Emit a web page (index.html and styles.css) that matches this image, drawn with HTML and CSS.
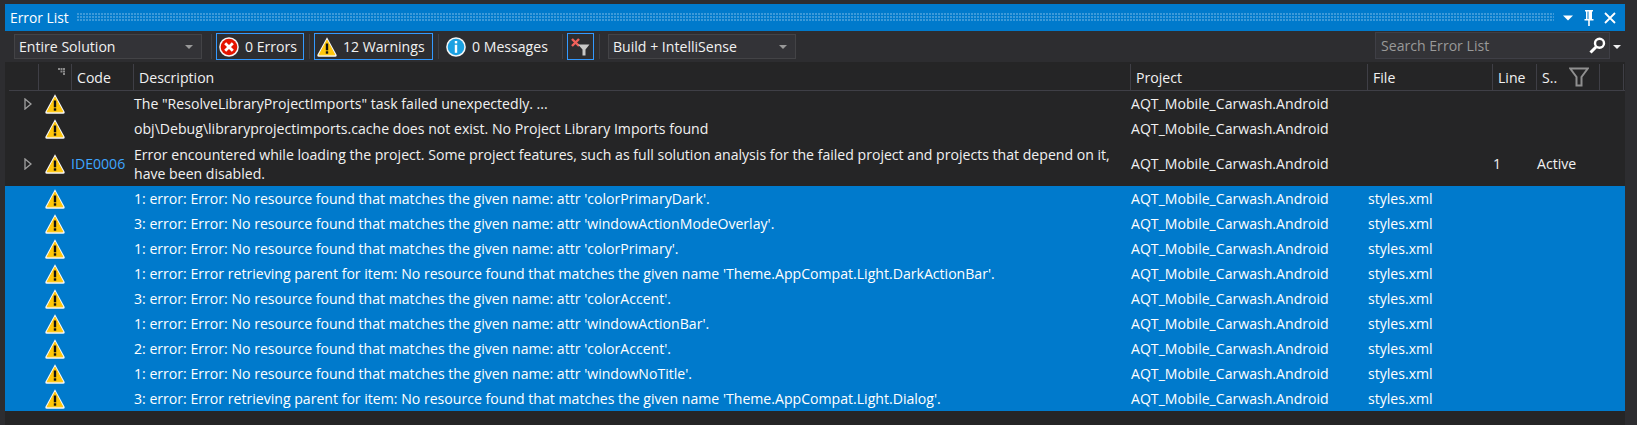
FILE: index.html
```html
<!DOCTYPE html>
<html lang="en">
<head>
<meta charset="utf-8">
<title>Error List</title>
<link rel="stylesheet" href="styles.css">
</head>
<body>
<svg class="defs" width="0" height="0" aria-hidden="true">
  <symbol id="warn" viewBox="0 0 20 20">
    <path d="M10 .3 L19.7 18 Q20 19.700 18.400 19.700 L1.600 19.700 Q0 19.700 .3 18 Z" fill="#f6f6f6"/>
    <path d="M10 3.200 L17.800 17.800 L2.200 17.800 Z" fill="#ffc60a" stroke="#ffc60a" stroke-linejoin="round"/>
    <rect x="8.800" y="6.500" width="2.400" height="6.800" fill="#111"/>
    <rect x="8.800" y="14.300" width="2.400" height="2.400" fill="#111"/>
  </symbol>
</svg>
<main class="window">
  <header class="titlebar">
    <span class="title">Error List</span>
    <span class="grip"></span>
    <span class="win-btns">
      <svg width="12" height="12" viewBox="0 0 12 12"><path d="M1 3.500h10l-5 5z" fill="#fff"/></svg>
      <svg width="12" height="16" viewBox="0 0 12 16"><path d="M2 0h8v1.500H9V9h1.500v1.500H6.800V16H5.200v-5.500H1.500V9H3V1.500H2zM4.500 1.500V9h1V1.500z" fill="#fff" fill-rule="evenodd"/></svg>
      <svg width="12" height="12" viewBox="0 0 12 12"><path d="M1 1l10 10M11 1L1 11" stroke="#fff" stroke-width="1.800" fill="none"/></svg>
    </span>
  </header>
  <div class="toolbar">
    <div class="combo combo-scope"><span>Entire Solution</span><i class="caret"></i></div>
    <span class="sep"></span>
    <button class="tbtn on btn-errors">
      <svg width="20" height="20" viewBox="0 0 20 20"><circle cx="10" cy="10" r="9.800" fill="#f6f6f6"/><circle cx="10" cy="10" r="8.300" fill="#e51400"/><path d="M6.200 6.200l7.600 7.600M13.800 6.200l-7.600 7.600" stroke="#fff" stroke-width="2.800"/></svg>
      <span>0 Errors</span>
    </button>
    <span class="sep"></span>
    <button class="tbtn on btn-warn">
      <svg class="ico"><use href="#warn"/></svg>
      <span>12 Warnings</span>
    </button>
    <span class="sep"></span>
    <button class="tbtn btn-msg">
      <svg width="20" height="20" viewBox="0 0 20 20"><circle cx="10" cy="10" r="9.800" fill="#f6f6f6"/><circle cx="10" cy="10" r="8.300" fill="#1ba1e2"/><rect x="8.800" y="4" width="2.400" height="2.400" fill="#fff"/><rect x="8.800" y="7.800" width="2.400" height="8" fill="#fff"/></svg>
      <span>0 Messages</span>
    </button>
    <span class="sep"></span>
    <button class="tbtn on btn-filter">
      <svg width="20" height="18" viewBox="0 0 20 18"><path d="M1 1l7 7M8 1L1 8" stroke="#f1605a" stroke-width="2.400"/><path d="M7 6.500h11.500l-4 5v6h-3v-6z" fill="#c8c8c8"/></svg>
    </button>
    <span class="sep"></span>
    <div class="combo combo-type"><span>Build + IntelliSense</span><i class="caret"></i></div>
    <div class="search"><span class="search-text">Search Error List</span>
      <svg width="17" height="17" viewBox="0 0 17 17"><circle cx="10.500" cy="6.200" r="4.500" fill="none" stroke="#fff" stroke-width="2.400"/><path d="M7 10l-5.500 5.500" stroke="#fff" stroke-width="3"/></svg>
    </div>
    <i class="caret caret-search"></i>
  </div>
  <div class="grid">
    <div class="row head">
      <span class="hc"></span>
      <span class="hc hc-sort"><svg width="7" height="7" viewBox="0 0 7 7"><path d="M0 0h2v2H0zM2.500 0h2v2h-2zM5 0h2v2H5zM2.500 2.500h2v2h-2zM5 2.500h2v2H5zM5 5h2v2H5z" fill="#8a8a8a"/></svg></span>
      <span class="hc">Code</span>
      <span class="hc">Description</span>
      <span class="hc">Project</span>
      <span class="hc">File</span>
      <span class="hc">Line</span>
      <span class="hc hc-state">S..<svg width="20" height="20" viewBox="0 0 20 20"><path d="M1.200 1.500h17.600L12.500 10v8.500h-5V10z" fill="none" stroke="#8f8f8f" stroke-width="2"/></svg></span>
      <span class="hc"></span>
    </div>
    <div class="row"><span class="exp"><svg width="8" height="12" viewBox="0 0 8 12"><path d="M1 1l6 5-6 5z" fill="none" stroke="#a0a0a0" stroke-width="1.300"/></svg></span><span class="wi"><svg class="ico"><use href="#warn"/></svg></span><span class="code"></span><span class="desc">The "ResolveLibraryProjectImports" task failed unexpectedly. ...</span><span class="proj">AQT_Mobile_Carwash.Android</span><span class="file"></span><span class="line"></span><span class="state"></span></div>
    <div class="row"><span class="exp"></span><span class="wi"><svg class="ico"><use href="#warn"/></svg></span><span class="code"></span><span class="desc">obj\Debug\libraryprojectimports.cache does not exist. No Project Library Imports found</span><span class="proj">AQT_Mobile_Carwash.Android</span><span class="file"></span><span class="line"></span><span class="state"></span></div>
    <div class="row tall"><span class="exp"><svg width="8" height="12" viewBox="0 0 8 12"><path d="M1 1l6 5-6 5z" fill="none" stroke="#a0a0a0" stroke-width="1.300"/></svg></span><span class="wi"><svg class="ico"><use href="#warn"/></svg></span><span class="code link">IDE0006</span><span class="desc">Error encountered while loading the project. Some project features, such as full solution analysis for the failed project and projects that depend on it, have been disabled.</span><span class="proj">AQT_Mobile_Carwash.Android</span><span class="file"></span><span class="line">1</span><span class="state">Active</span></div>
    <div class="row sel"><span class="exp"></span><span class="wi"><svg class="ico"><use href="#warn"/></svg></span><span class="code"></span><span class="desc">1: error: Error: No resource found that matches the given name: attr 'colorPrimaryDark'.</span><span class="proj">AQT_Mobile_Carwash.Android</span><span class="file">styles.xml</span><span class="line"></span><span class="state"></span></div>
    <div class="row sel"><span class="exp"></span><span class="wi"><svg class="ico"><use href="#warn"/></svg></span><span class="code"></span><span class="desc">3: error: Error: No resource found that matches the given name: attr 'windowActionModeOverlay'.</span><span class="proj">AQT_Mobile_Carwash.Android</span><span class="file">styles.xml</span><span class="line"></span><span class="state"></span></div>
    <div class="row sel"><span class="exp"></span><span class="wi"><svg class="ico"><use href="#warn"/></svg></span><span class="code"></span><span class="desc">1: error: Error: No resource found that matches the given name: attr 'colorPrimary'.</span><span class="proj">AQT_Mobile_Carwash.Android</span><span class="file">styles.xml</span><span class="line"></span><span class="state"></span></div>
    <div class="row sel"><span class="exp"></span><span class="wi"><svg class="ico"><use href="#warn"/></svg></span><span class="code"></span><span class="desc">1: error: Error retrieving parent for item: No resource found that matches the given name 'Theme.AppCompat.Light.DarkActionBar'.</span><span class="proj">AQT_Mobile_Carwash.Android</span><span class="file">styles.xml</span><span class="line"></span><span class="state"></span></div>
    <div class="row sel"><span class="exp"></span><span class="wi"><svg class="ico"><use href="#warn"/></svg></span><span class="code"></span><span class="desc">3: error: Error: No resource found that matches the given name: attr 'colorAccent'.</span><span class="proj">AQT_Mobile_Carwash.Android</span><span class="file">styles.xml</span><span class="line"></span><span class="state"></span></div>
    <div class="row sel"><span class="exp"></span><span class="wi"><svg class="ico"><use href="#warn"/></svg></span><span class="code"></span><span class="desc">1: error: Error: No resource found that matches the given name: attr 'windowActionBar'.</span><span class="proj">AQT_Mobile_Carwash.Android</span><span class="file">styles.xml</span><span class="line"></span><span class="state"></span></div>
    <div class="row sel"><span class="exp"></span><span class="wi"><svg class="ico"><use href="#warn"/></svg></span><span class="code"></span><span class="desc">2: error: Error: No resource found that matches the given name: attr 'colorAccent'.</span><span class="proj">AQT_Mobile_Carwash.Android</span><span class="file">styles.xml</span><span class="line"></span><span class="state"></span></div>
    <div class="row sel"><span class="exp"></span><span class="wi"><svg class="ico"><use href="#warn"/></svg></span><span class="code"></span><span class="desc">1: error: Error: No resource found that matches the given name: attr 'windowNoTitle'.</span><span class="proj">AQT_Mobile_Carwash.Android</span><span class="file">styles.xml</span><span class="line"></span><span class="state"></span></div>
    <div class="row sel"><span class="exp"></span><span class="wi"><svg class="ico"><use href="#warn"/></svg></span><span class="code"></span><span class="desc">3: error: Error retrieving parent for item: No resource found that matches the given name 'Theme.AppCompat.Light.Dialog'.</span><span class="proj">AQT_Mobile_Carwash.Android</span><span class="file">styles.xml</span><span class="line"></span><span class="state"></span></div>
  </div>
</main>
</body>
</html>
```
FILE: styles.css
```css
* { box-sizing: border-box; }
html, body { margin: 0; height: 100%; }
body {
  background: #2d2d30;
  overflow: hidden;
  font-family: "Open Sans", "Noto Sans", sans-serif;
  font-size: 14.1px;
  color: #f1f1f1;
}
.defs { display: block; height: 0; }
.window {
  margin: 4px 12px 0 5px;
  height: 421px;
  background: #252526;
  display: flex;
  flex-direction: column;
}
.titlebar {
  height: 27px;
  background: #007acc;
  display: flex;
  align-items: center;
  padding-left: 5px;
  color: #fff;
}
.title { width: 67px; font-size: 13.8px; }
.grip {
  width: 1477px;
  height: 9px;
  background-image: radial-gradient(circle at 1px 1px, #3d9ad9 0.9px, transparent 1px);
  background-size: 3px 3px;
}
.win-btns { display: flex; align-items: center; gap: 9px; margin-left: 8px; }
.win-btns svg { display: block; }
.toolbar {
  height: 31px;
  background: #2d2d30;
  display: flex;
  align-items: center;
  padding-left: 9px;
}
.combo {
  height: 25px;
  background: #333337;
  border: 1px solid #434346;
  display: flex;
  align-items: center;
  justify-content: space-between;
  padding: 0 8px 0 4px;
  width: 188px;
}
.combo-scope { margin-right: 4px; }
.combo-type { margin-left: 4px; }
.caret {
  width: 0; height: 0;
  border-left: 4px solid transparent;
  border-right: 4px solid transparent;
  border-top: 4px solid #999;
}
.sep { width: 1px; height: 25px; background: #3f3f46; margin: 0 4px 0 5px; }
.tbtn {
  height: 27px;
  background: transparent;
  border: 1px solid transparent;
  color: #f1f1f1;
  font: inherit;
  display: flex;
  align-items: center;
  gap: 6px;
  padding: 0 2px;
}
.tbtn.on { border-color: #3399ff; }
.btn-errors { width: 88px; }
.btn-warn { width: 119px; }
.btn-msg { width: 114px; }
.btn-filter { width: 27px; padding: 0 2px; justify-content: center; }
.ico { width: 20px; height: 20px; display: block; }
.search {
  margin-left: auto;
  width: 235px;
  height: 27px;
  background: #333337;
  border: 1px solid #3f3f46;
  display: flex;
  align-items: center;
  justify-content: space-between;
  padding: 0 3px 0 5px;
  margin-top: -2px;
}
.search-text { color: #999; }
.caret-search { margin: 0 4px 0 3px; border-top-color: #eee; }
.grid { flex: 1; padding-top: 2px; }
.row {
  display: grid;
  grid-template-columns: 33px 33px 63px 997px 237px 125px 44px 63px 24px;
  height: 25px;
  align-items: center;
  white-space: nowrap;
}
.row.tall { height: 45px; }
.row.sel { background: #007acc; color: #fff; }
.head {
  height: 27px;
  margin-left: 4px;
  grid-template-columns: 30px 33px 62px 997px 237px 125px 44px 63px 24px;
  border-bottom: 1px solid #3f3f46;
  align-items: stretch;
}
.hc {
  border-right: 1px solid #3f3f46;
  display: flex;
  align-items: center;
  padding-left: 5px;
}
.hc-sort { align-items: flex-start; justify-content: flex-end; padding: 4px 6px 0 0; }
.hc-state { justify-content: space-between; padding-right: 10px; }
.exp { display: flex; justify-content: center; padding-left: 12px; }
.wi { display: flex; justify-content: center; }
.link { color: #3ea6ff; }
.desc { white-space: normal; line-height: 19px; }
```
